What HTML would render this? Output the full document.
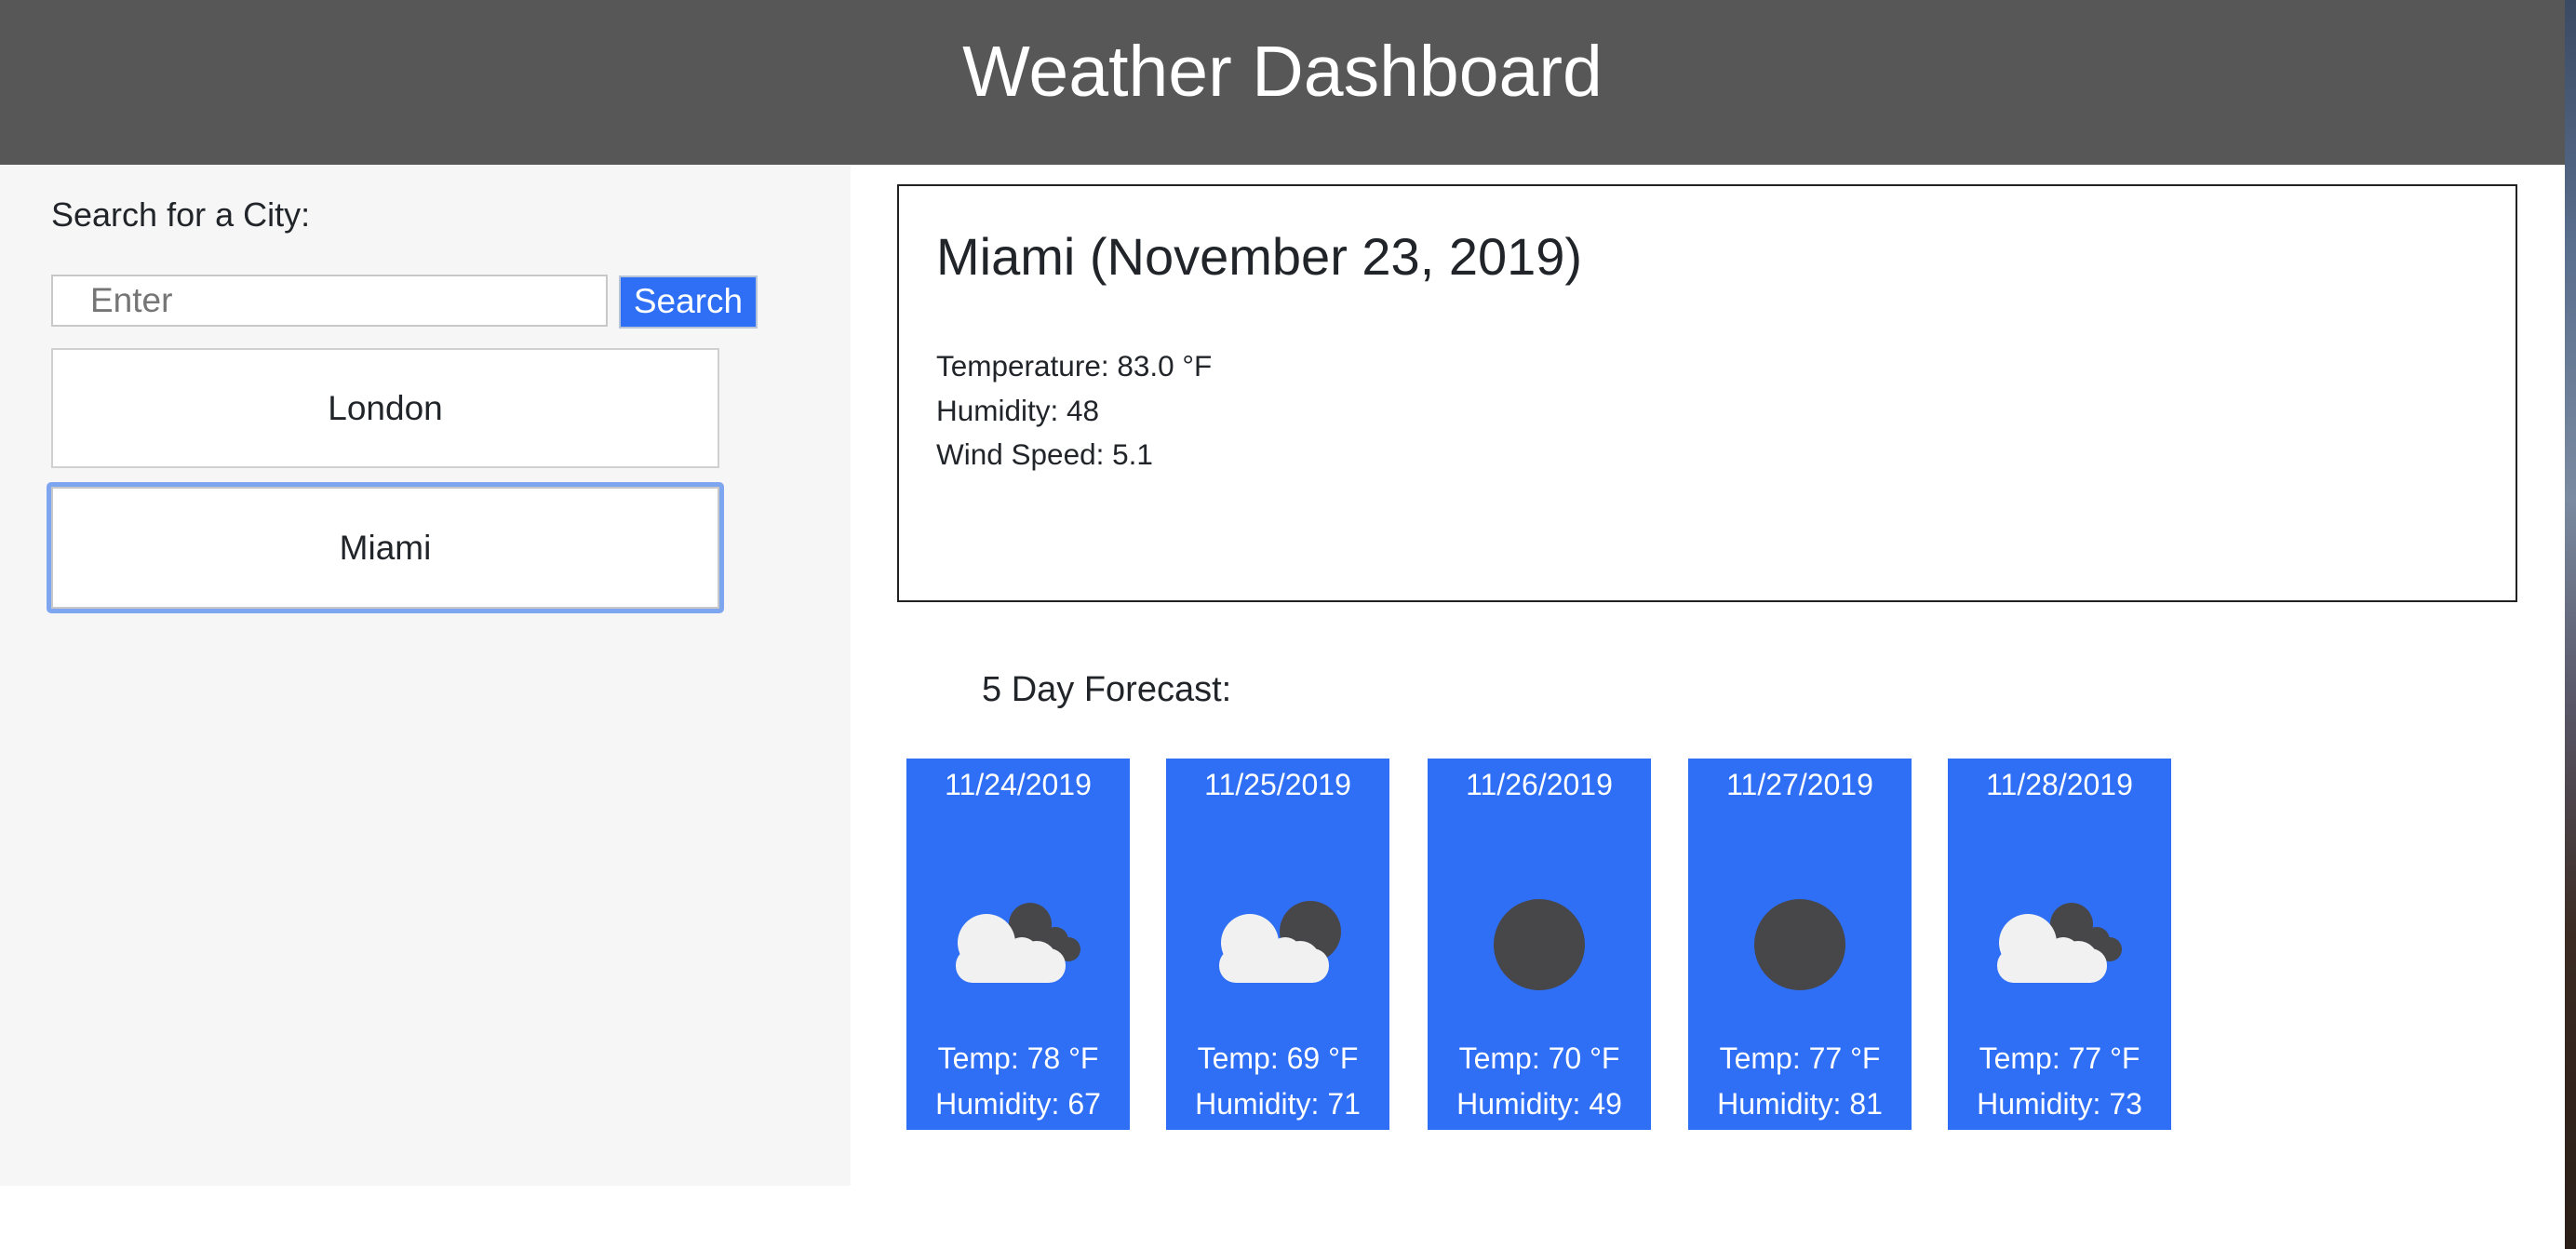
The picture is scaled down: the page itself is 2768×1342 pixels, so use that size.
<!DOCTYPE html>
<html><head><meta charset="utf-8"><style>
*{box-sizing:border-box;margin:0;padding:0}
body{width:2768px;height:1342px;position:relative;background:#fff;font-family:"Liberation Sans",Arial,sans-serif;color:#212529;overflow:hidden}
.abs{position:absolute}
#hdr{left:0;top:0;width:2756px;height:177px;background:#575757;color:#fff;font-size:77px;text-align:center;line-height:154px}
#strip{left:2756px;top:0;width:12px;height:1342px;background:linear-gradient(#3b4a63,#5a6f8e 20%,#7a8aa0 40%,#5b5a6c 55%,#3a2a22 75%,#2a1e18)}
#left{left:0;top:177px;width:914px;height:1097px;background:#f6f6f6}
.t{white-space:nowrap}
.card{position:absolute;top:815px;width:240px;height:399px;background:#2f6ff5;color:#fff;text-align:center;font-size:32px}
.card .d{position:absolute;top:10px;width:100%}
.card .a{position:absolute;top:304px;width:100%}
.card .b{position:absolute;top:353px;width:100%}
.card svg{position:absolute;left:0;top:0}
</style></head><body>
<div class="abs" id="hdr">Weather Dashboard</div>
<div class="abs" id="strip"></div>
<div class="abs" id="left"></div>
<div class="abs t" style="left:55px;top:210px;font-size:36px">Search for a City:</div>
<div class="abs" style="left:55px;top:295px;width:598px;height:56px;background:#fff;border:2px solid #c8c8c8"></div>
<div class="abs t" style="left:97px;top:302px;font-size:37px;color:#757575">Enter</div>
<div class="abs t" style="left:665px;top:296px;width:149px;height:57px;background:#2f6ff5;border:2px solid #b8c4d8;color:#fff;font-size:37px;text-align:center;line-height:52px">Search</div>
<div class="abs" style="left:55px;top:374px;width:718px;height:129px;background:#fff;border:2px solid #d0d0d0;font-size:37px;text-align:center;line-height:125px">London</div>
<div class="abs" style="left:50px;top:518px;width:728px;height:141px;border:5px solid #7ea6f0;border-radius:5px"></div>
<div class="abs" style="left:55px;top:523px;width:718px;height:131px;background:#fff;border:2px solid #c8c8c8;font-size:37px;text-align:center;line-height:127px">Miami</div>
<div class="abs" style="left:964px;top:198px;width:1741px;height:449px;border:2px solid #222"></div>
<div class="abs t" style="left:1006px;top:243px;font-size:56px">Miami (November 23, 2019)</div>
<div class="abs t" style="left:1006px;top:370px;font-size:31.5px;line-height:47.5px">Temperature: 83.0 °F<br>Humidity: 48<br>Wind Speed: 5.1</div>
<div class="abs t" style="left:1055px;top:720px;font-size:38px">5 Day Forecast:</div>

<div class="card" style="left:974px"><svg width="240" height="399" viewBox="0 0 240 399"><g fill="#474749"><circle cx="133" cy="178" r="23"/><circle cx="160" cy="195" r="14"/><circle cx="174" cy="205" r="13"/><rect x="120" y="190" width="56" height="28" rx="10"/></g><g fill="#f1f1f1"><circle cx="86" cy="198" r="31"/><circle cx="140" cy="218" r="22"/><circle cx="124" cy="210" r="18"/><rect x="53" y="204" width="118" height="37" rx="18"/></g></svg><div class="d">11/24/2019</div><div class="a">Temp: 78 °F</div><div class="b">Humidity: 67</div></div>

<div class="card" style="left:1253px"><svg width="240" height="399" viewBox="0 0 240 399"><circle cx="155" cy="186" r="33" fill="#474749"/><g fill="#f1f1f1"><circle cx="90" cy="198" r="31"/><circle cx="144" cy="218" r="22"/><circle cx="128" cy="210" r="18"/><rect x="57" y="204" width="118" height="37" rx="18"/></g></svg><div class="d">11/25/2019</div><div class="a">Temp: 69 °F</div><div class="b">Humidity: 71</div></div>

<div class="card" style="left:1534px"><svg width="240" height="399" viewBox="0 0 240 399"><circle cx="120" cy="200" r="49" fill="#474749"/></svg><div class="d">11/26/2019</div><div class="a">Temp: 70 °F</div><div class="b">Humidity: 49</div></div>

<div class="card" style="left:1814px"><svg width="240" height="399" viewBox="0 0 240 399"><circle cx="120" cy="200" r="49" fill="#474749"/></svg><div class="d">11/27/2019</div><div class="a">Temp: 77 °F</div><div class="b">Humidity: 81</div></div>

<div class="card" style="left:2093px"><svg width="240" height="399" viewBox="0 0 240 399"><g fill="#474749"><circle cx="133" cy="178" r="23"/><circle cx="160" cy="195" r="14"/><circle cx="174" cy="205" r="13"/><rect x="120" y="190" width="56" height="28" rx="10"/></g><g fill="#f1f1f1"><circle cx="86" cy="198" r="31"/><circle cx="140" cy="218" r="22"/><circle cx="124" cy="210" r="18"/><rect x="53" y="204" width="118" height="37" rx="18"/></g></svg><div class="d">11/28/2019</div><div class="a">Temp: 77 °F</div><div class="b">Humidity: 73</div></div>
</body></html>
